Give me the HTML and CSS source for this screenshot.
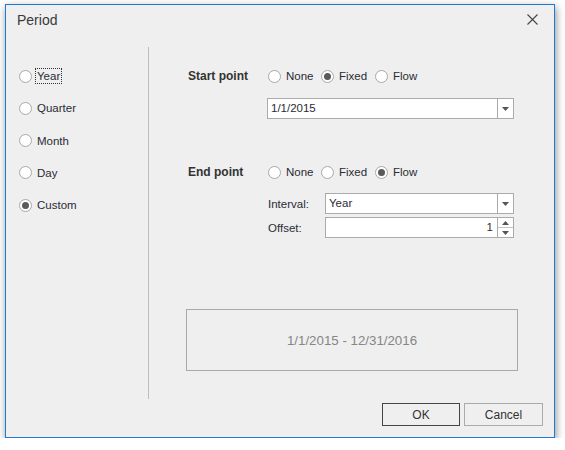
FILE: index.html
```html
<!DOCTYPE html>
<html>
<head>
<meta charset="utf-8">
<title>Period</title>
<link rel="stylesheet" href="styles.css">
</head>
<body>
<div class="window">
  <div class="titlebar">
    <span class="title">Period</span>
    <svg class="close" width="11" height="11" viewBox="0 0 11 11"><path d="M0.5 0.5L10.5 10.5M10.5 0.5L0.5 10.5" stroke="#444" stroke-width="1.1" fill="none"/></svg>
  </div>
  <div class="main">
    <div class="left">
      <div class="radio"><span class="dot"></span><span class="text focus">Year</span></div>
      <div class="radio"><span class="dot"></span><span class="text">Quarter</span></div>
      <div class="radio"><span class="dot"></span><span class="text">Month</span></div>
      <div class="radio"><span class="dot"></span><span class="text">Day</span></div>
      <div class="radio"><span class="dot checked"></span><span class="text">Custom</span></div>
    </div>
    <div class="sep"></div>
    <div class="right">
      <div class="row">
        <span class="row-label">Start point</span>
        <div class="radios">
          <div class="radio"><span class="dot"></span><span class="text">None</span></div>
          <div class="radio"><span class="dot checked"></span><span class="text">Fixed</span></div>
          <div class="radio"><span class="dot"></span><span class="text">Flow</span></div>
        </div>
      </div>
      <div class="combo start-combo">
        <span class="value">1/1/2015</span>
        <span class="drop"><svg width="7" height="4" viewBox="0 0 7 4"><path d="M0 0H7L3.5 4Z" fill="#555"/></svg></span>
      </div>
      <div class="row end-row">
        <span class="row-label">End point</span>
        <div class="radios">
          <div class="radio"><span class="dot"></span><span class="text">None</span></div>
          <div class="radio"><span class="dot"></span><span class="text">Fixed</span></div>
          <div class="radio"><span class="dot checked"></span><span class="text">Flow</span></div>
        </div>
      </div>
      <div class="field first-field">
        <span class="field-label">Interval:</span>
        <div class="combo small">
          <span class="value">Year</span>
          <span class="drop"><svg width="7" height="4" viewBox="0 0 7 4"><path d="M0 0H7L3.5 4Z" fill="#555"/></svg></span>
        </div>
      </div>
      <div class="field second-field">
        <span class="field-label">Offset:</span>
        <div class="combo small">
          <span class="value num">1</span>
          <span class="spin">
            <span class="spin-btn"><svg width="7" height="4" viewBox="0 0 7 4"><path d="M0 4H7L3.5 0Z" fill="#555"/></svg></span>
            <span class="spin-btn"><svg width="7" height="4" viewBox="0 0 7 4"><path d="M0 0H7L3.5 4Z" fill="#555"/></svg></span>
          </span>
        </div>
      </div>
      <div class="summary">1/1/2015 - 12/31/2016</div>
    </div>
  </div>
  <div class="footer">
    <button class="btn default">OK</button>
    <button class="btn cancel">Cancel</button>
  </div>
</div>
</body>
</html>
```
FILE: styles.css
```css
html, body {
  margin: 0;
  padding: 0;
  background: #ffffff;
}

body {
  font-family: "Liberation Sans", Arial, sans-serif;
  font-size: 11.5px;
  color: #2b2b35;
}

.window {
  margin: 4px 0 0 5px;
  width: 550px;
  height: 434px;
  box-sizing: border-box;
  border: 1px solid #1f7ad1;
  background: #efefef;
  box-shadow: 1px 3px 8px rgba(0, 0, 0, 0.45);
  display: flex;
  flex-direction: column;
}

.titlebar {
  height: 42px;
  flex: none;
  display: flex;
  align-items: flex-start;
  padding: 7px 16px 0 11px;
  box-sizing: border-box;
}

.title {
  font-size: 14px;
  line-height: 16px;
  color: #3a3a3a;
}

.close {
  margin-left: auto;
  margin-top: 2px;
}

.main {
  height: 352px;
  flex: none;
  display: flex;
}

.left {
  width: 142px;
  flex: none;
  box-sizing: border-box;
  padding: 21px 0 0 13px;
  display: flex;
  flex-direction: column;
  gap: 16.25px;
}

.sep {
  width: 1px;
  background: #bdbdbd;
  flex: none;
}

.right {
  flex: 1;
  padding: 21px 0 0 38px;
  display: flex;
  flex-direction: column;
  align-items: flex-start;
}

.radio {
  display: flex;
  align-items: center;
  height: 16px;
}

.dot {
  width: 13px;
  height: 13px;
  box-sizing: border-box;
  border: 1px solid #a8a8a8;
  border-radius: 50%;
  background: #ffffff;
  display: flex;
  align-items: center;
  justify-content: center;
  flex: none;
}

.dot.checked::after {
  content: "";
  width: 7px;
  height: 7px;
  border-radius: 50%;
  background: #5a5a5a;
}

.text {
  margin-left: 3px;
  padding: 0 1px;
  border: 1px dotted transparent;
  line-height: 14px;
}

.text.focus {
  border-color: #333;
}

.row {
  display: flex;
  align-items: center;
  height: 16px;
}

.row-label {
  width: 80px;
  padding-left: 1px;
  box-sizing: border-box;
  font-weight: bold;
  font-size: 12px;
  color: #333;
}

.radios {
  display: grid;
  grid-template-columns: 53px 54px auto;
}

.radios .dot {
  margin-left: 1px;
}

.combo {
  height: 21px;
  box-sizing: border-box;
  border: 1px solid #ababab;
  background: #ffffff;
  display: flex;
  align-items: stretch;
}

.start-combo {
  width: 247px;
  margin: 14px 0 0 80px;
}

.combo.small {
  width: 189px;
}

.value {
  flex: 1;
  padding-left: 3px;
  line-height: 19px;
  font-size: 11.5px;
}

.value.num {
  text-align: right;
  padding-right: 4px;
}

.drop {
  width: 15px;
  border-left: 1px solid #ababab;
  display: flex;
  align-items: center;
  justify-content: center;
}

.spin {
  width: 15px;
  border-left: 1px solid #ababab;
  display: flex;
  flex-direction: column;
}

.spin-btn {
  flex: 1;
  display: flex;
  align-items: center;
  justify-content: center;
}

.spin-btn + .spin-btn {
  border-top: 1px solid #c4c4c4;
}

.end-row {
  margin-top: 45px;
}

.field {
  display: flex;
  align-items: center;
  margin-left: 80px;
}

.first-field {
  margin-top: 13px;
}

.second-field {
  margin-top: 3px;
}

.field-label {
  width: 58px;
  padding-left: 1px;
  box-sizing: border-box;
}

.summary {
  margin: 71px 0 0 -1px;
  width: 332px;
  height: 62px;
  box-sizing: border-box;
  border: 1px solid #a9a9a9;
  display: flex;
  align-items: center;
  justify-content: center;
  font-size: 13.3px;
  color: #868686;
}

.footer {
  display: flex;
  justify-content: flex-end;
  gap: 4px;
  padding: 4px 11px 11px 0;
}

.btn {
  height: 23px;
  box-sizing: border-box;
  background: #efefef;
  border: 1px solid #ababab;
  font-family: "Liberation Sans", Arial, sans-serif;
  font-size: 12px;
  color: #333;
  padding: 0;
  border-radius: 0;
}

.btn.default {
  width: 78px;
  border-color: #454545;
}

.btn.cancel {
  width: 79px;
}
```
